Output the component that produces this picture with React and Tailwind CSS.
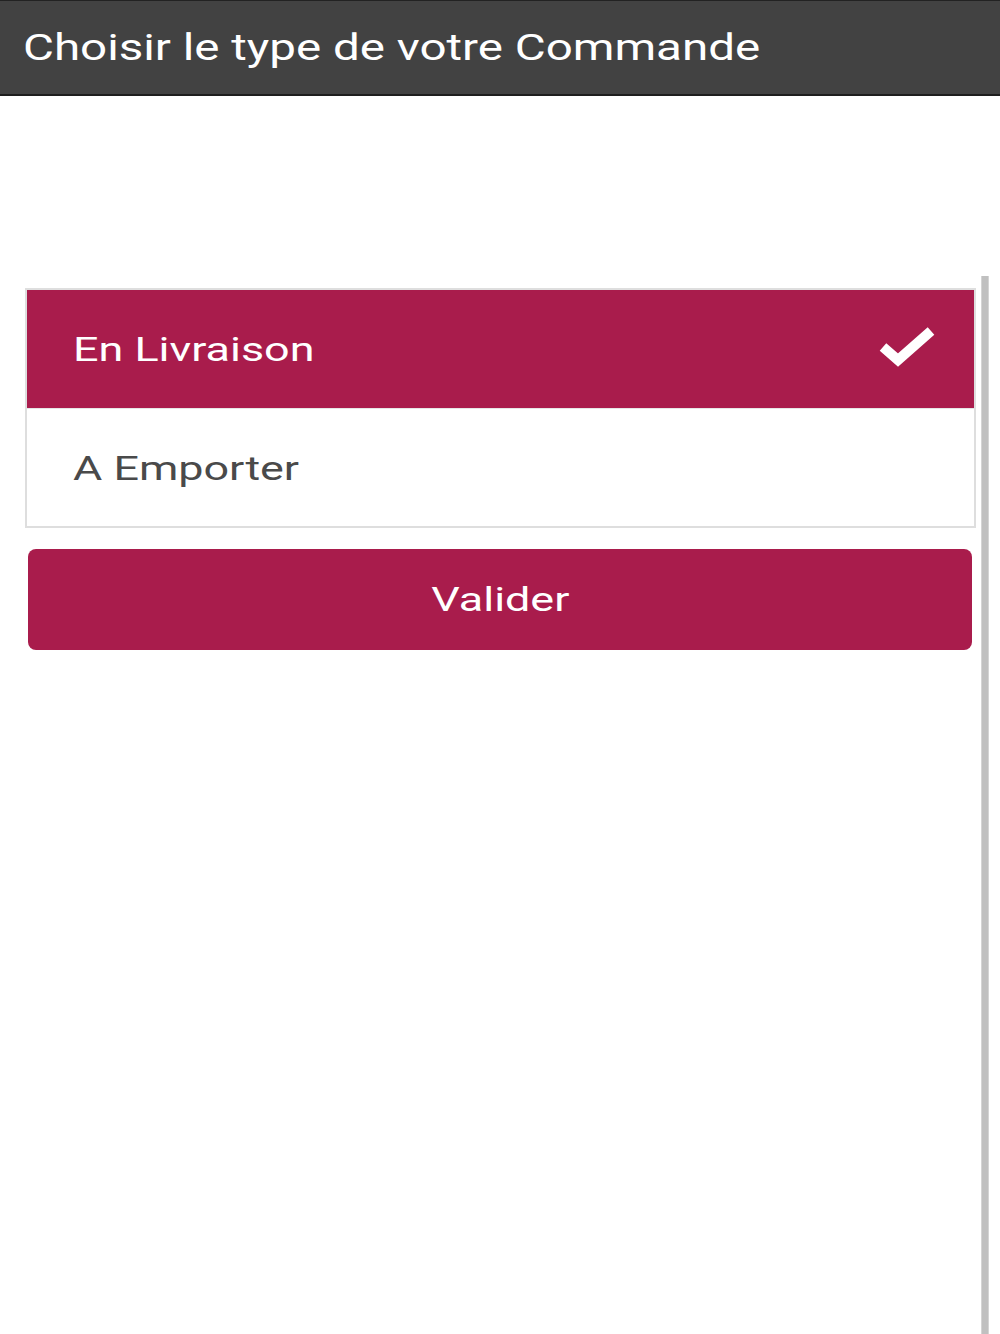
import { useState } from 'react';

const OPTIONS = ['En Livraison', 'A Emporter'];

function Check() {
  return (
    <svg width="60" height="48" viewBox="0 0 60 48" className="shrink-0">
      <polyline
        points="5,22 20,35 53,6"
        fill="none"
        stroke="#ffffff"
        strokeWidth="10"
        strokeLinejoin="miter"
      />
    </svg>
  );
}

export default function App() {
  const [selected, setSelected] = useState(0);

  return (
    <div className="min-h-[1334px] bg-white flex flex-col" style={{ fontFamily: 'Roboto, "Noto Sans", sans-serif' }}>
      {/* Header */}
      <div className="h-[96px] bg-[#424242] border-t border-[#222] border-b-2 border-b-[#1e1e1e] flex items-center px-[23px] shrink-0">
        <h1 className="text-white text-[36px] leading-none inline-block origin-left scale-x-[1.32] whitespace-nowrap">
          Choisir le type de votre Commande
        </h1>
      </div>

      <div className="flex flex-1">
        {/* Content */}
        <div className="w-[976px] pl-[25px] pt-[192px]">
          <div className="border-2 border-[#dedede] bg-white">
            {OPTIONS.map((opt, i) => {
              const active = selected === i;
              return (
                <button
                  key={opt}
                  onClick={() => setSelected(i)}
                  className={`w-full h-[118px] flex items-center justify-between pl-[46px] pr-[36px] text-left ${
                    active ? 'bg-[#a91c4c] text-white' : 'bg-white text-[#4a4a4a] border-t border-[#e6e6e6]'
                  }`}
                >
                  <span className="text-[34px] leading-none inline-block origin-left scale-x-[1.32] whitespace-nowrap">{opt}</span>
                  {active && <Check />}
                </button>
              );
            })}
          </div>

          <button className="mt-[21px] ml-[3px] w-[944px] h-[101px] rounded-[8px] bg-[#a91c4c] text-white">
            <span className="text-[34px] leading-none inline-block scale-x-[1.32]">Valider</span>
          </button>
        </div>

        {/* Scrollbar */}
        <div className="ml-[5px] mt-[180px] w-[8px] bg-[#c0c0c0] border-x border-[#d4d4d4]" />
      </div>
    </div>
  );
}
